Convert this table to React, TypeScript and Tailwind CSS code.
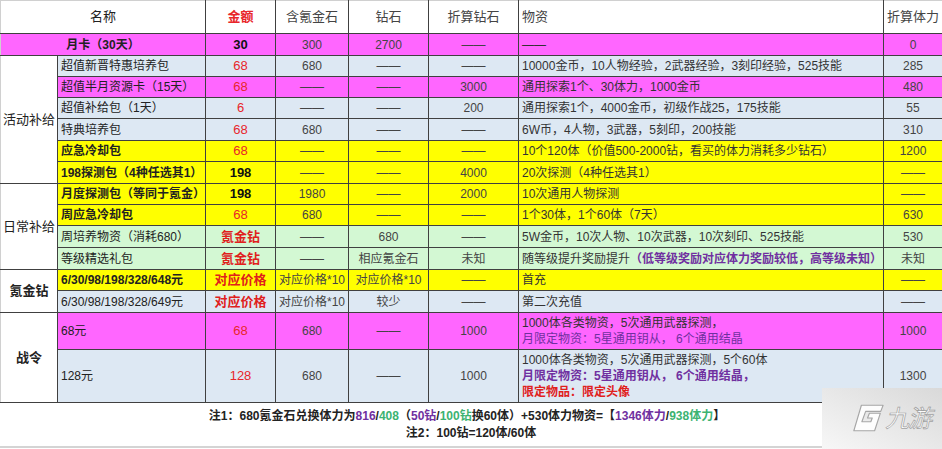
import type { ReactNode } from 'react';

const MAG = 'bg-[#ff66ff]';
const BLUE = 'bg-[#dde8f3]';
const YEL = 'bg-[#ffff00]';
const GRN = 'bg-[#d3f8d3]';

const RED = 'text-[#e8262a]';
const RED_B = 'text-[#e0201c] font-bold';
const BLK_B = 'text-[#111] font-bold';
const PURPLE = 'text-[#7030a0]';

type Row = {
  h: string;
  bg: string;
  cat?: { text: string; span: number; bold?: boolean };
  wide?: boolean;
  name: string;
  nameBold?: boolean;
  amt: string;
  amtCls: string;
  kr: string;
  zs: string;
  zh: string;
  mat: ReactNode;
  ti: string;
};

const D = '——';

const rows: Row[] = [
  { h: 'h-[22px]', bg: MAG, wide: true, name: '月卡（30天）', amt: '30', amtCls: BLK_B, kr: '300', zs: '2700', zh: D, mat: D, ti: '0' },
  {
    h: 'h-[21px]', bg: BLUE, cat: { text: '活动补给', span: 6 }, name: '超值新晋特惠培养包', amt: '68', amtCls: RED,
    kr: '680', zs: D, zh: D, mat: '10000金币，10人物经验，2武器经验，3刻印经验，525技能', ti: '285',
  },
  { h: 'h-[21px]', bg: MAG, name: '超值半月资源卡（15天）', amt: '68', amtCls: RED, kr: D, zs: D, zh: '3000', mat: '通用探索1个、30体力，1000金币', ti: '480' },
  { h: 'h-[21px]', bg: BLUE, name: '超值补给包（1天）', amt: '6', amtCls: RED, kr: D, zs: D, zh: '200', mat: '通用探索1个，4000金币，初级作战25，175技能', ti: '55' },
  { h: 'h-[22px]', bg: BLUE, name: '特典培养包', amt: '68', amtCls: RED, kr: '680', zs: D, zh: D, mat: '6W币，4人物，3武器，5刻印，200技能', ti: '310' },
  {
    h: 'h-[21px]', bg: YEL, name: '应急冷却包', nameBold: true, amt: '68', amtCls: RED, kr: D, zs: D, zh: D,
    mat: '10个120体（价值500-2000钻，看买的体力消耗多少钻石）', ti: '1200',
  },
  { h: 'h-[22px]', bg: YEL, name: '198探测包（4种任选其1）', nameBold: true, amt: '198', amtCls: BLK_B, kr: D, zs: D, zh: '4000', mat: '20次探测（4种任选其1）', ti: D },
  {
    h: 'h-[21px]', bg: YEL, cat: { text: '日常补给', span: 4 }, name: '月度探测包（等同于氪金）', nameBold: true, amt: '198', amtCls: BLK_B,
    kr: '1980', zs: D, zh: '2000', mat: '10次通用人物探测', ti: D,
  },
  { h: 'h-[21px]', bg: YEL, name: '周应急冷却包', nameBold: true, amt: '68', amtCls: RED, kr: '680', zs: D, zh: D, mat: '1个30体，1个60体（7天）', ti: '630' },
  {
    h: 'h-[22px]', bg: GRN, name: '周培养物资（消耗680）', amt: '氪金钻', amtCls: RED_B, kr: D, zs: '680', zh: D,
    mat: '5W金币，10次人物、10次武器，10次刻印、525技能', ti: '530',
  },
  {
    h: 'h-[22px]', bg: GRN, name: '等级精选礼包', amt: '氪金钻', amtCls: RED_B, kr: D, zs: '相应氪金石', zh: '未知',
    mat: (
      <>
        随等级提升奖励提升<span className={`${PURPLE} font-bold`}>（低等级奖励对应体力奖励较低，高等级未知）</span>
      </>
    ),
    ti: '未知',
  },
  {
    h: 'h-[21px]', bg: YEL, cat: { text: '氪金钻', span: 2, bold: true }, name: '6/30/98/198/328/648元', nameBold: true, amt: '对应价格', amtCls: RED_B,
    kr: '对应价格*10', zs: '对应价格*10', zh: D, mat: '首充', ti: D,
  },
  { h: 'h-[22px]', bg: BLUE, name: '6/30/98/198/328/649元', amt: '对应价格', amtCls: RED_B, kr: '对应价格*10', zs: '较少', zh: D, mat: '第二次充值', ti: D },
  {
    h: 'h-[37px]', bg: MAG, cat: { text: '战令', span: 2, bold: true }, name: '68元', amt: '68', amtCls: RED, kr: '680', zs: D, zh: '1000',
    mat: (
      <>
        <div>1000体各类物资，5次通用武器探测，</div>
        <div className={PURPLE}>月限定物资：5星通用钥从， 6个通用结晶</div>
      </>
    ),
    ti: '1000',
  },
  {
    h: 'h-[53px]', bg: BLUE, name: '128元', amt: '128', amtCls: RED, kr: '680', zs: D, zh: '1000',
    mat: (
      <>
        <div>1000体各类物资，5次通用武器探测，5个60体</div>
        <div className={`${PURPLE} font-bold`}>月限定物资：5星通用钥从， 6个通用结晶，</div>
        <div className="font-bold text-[#e0201c]">限定物品：限定头像</div>
      </>
    ),
    ti: '1300',
  },
];

const cell = 'border border-[#404040] p-0 align-middle';

function Watermark() {
  return (
    <div className="absolute right-0 bottom-0 flex h-[61px] w-[120px] items-center gap-[2px] bg-linear-to-bl from-[#d9d9d9] to-[#f7f7f7] pl-[29px]">
      <svg width="34" height="31" viewBox="0 0 36 32" className="shrink-0">
        <path
          d="M11 2 H34 L31.5 8.5 H15.5 L11.5 19.5 H21 L22.5 15.5 H17.5 L19.5 10.5 H31 L25 29 H3 Z"
          fill="#fdfdfd"
          stroke="#a6a6a6"
          strokeWidth="1.2"
          strokeLinejoin="round"
        />
      </svg>
      <span className="-skew-x-12 text-[24px] leading-none font-normal tracking-[-1px] text-[#fdfdfd] [-webkit-text-stroke:0.7px_#a0a0a0]">
        九游
      </span>
    </div>
  );
}

export default function App() {
  return (
    <div
      lang="zh-CN"
      className="relative h-[449px] w-[942px] overflow-hidden bg-white font-['Liberation_Sans','Noto_Sans_CJK_SC',sans-serif] text-[12px] leading-[16px] text-[#222]"
    >
      <table className="w-[942px] table-fixed border-collapse">
        <colgroup>
          <col className="w-[57px]" />
          <col className="w-[148px]" />
          <col className="w-[70px]" />
          <col className="w-[73px]" />
          <col className="w-[80px]" />
          <col className="w-[90px]" />
          <col className="w-[365px]" />
          <col className="w-[59px]" />
        </colgroup>
        <thead>
          <tr className="h-[33px] text-[13px]">
            <th colSpan={2} className={`${cell} border-t-[#d0d0d0] border-l-[#d0d0d0] font-normal`}>名称</th>
            <th className={`${cell} border-t-[#d0d0d0] font-bold text-[#e8262a]`}>金额</th>
            <th className={`${cell} border-t-[#d0d0d0] font-normal text-[#444]`}>含氪金石</th>
            <th className={`${cell} border-t-[#d0d0d0] font-normal text-[#444]`}>钻石</th>
            <th className={`${cell} border-t-[#d0d0d0] font-normal text-[#444]`}>折算钻石</th>
            <th className={`${cell} border-t-[#d0d0d0] px-[3px] text-left font-normal text-[#444]`}>物资</th>
            <th className={`${cell} border-t-[#d0d0d0] border-r-[#d0d0d0] font-normal text-[#444]`}>折算体力</th>
          </tr>
        </thead>
        <tbody>
          {rows.map((r) => (
            <tr key={r.name} className={r.h}>
              {r.cat && (
                <td
                  rowSpan={r.cat.span}
                  className={`${cell} border-l-[#d0d0d0] bg-white text-center text-[13px] ${r.cat.bold ? 'font-bold' : ''}`}
                >
                  {r.cat.text}
                </td>
              )}
              <td
                colSpan={r.wide ? 2 : 1}
                className={`${cell} ${r.bg} whitespace-nowrap px-[3px] text-[12px] ${r.wide ? 'border-l-[#d0d0d0] text-center font-bold' : 'text-left'} ${r.nameBold ? 'font-bold' : ''}`}
              >
                {r.name}
              </td>
              <td className={`${cell} ${r.bg} text-center text-[13px] ${r.amtCls}`}>{r.amt}</td>
              <td className={`${cell} ${r.bg} whitespace-nowrap text-center text-[#444]`}>{r.kr}</td>
              <td className={`${cell} ${r.bg} whitespace-nowrap text-center text-[#444]`}>{r.zs}</td>
              <td className={`${cell} ${r.bg} text-center text-[#444]`}>{r.zh}</td>
              <td className={`${cell} ${r.bg} whitespace-nowrap px-[3px] text-left text-[#333]`}>{r.mat}</td>
              <td className={`${cell} ${r.bg} border-r-[#d0d0d0] text-center text-[#444]`}>{r.ti}</td>
            </tr>
          ))}
        </tbody>
      </table>
      <div className="flex h-[45px] flex-col items-center justify-center border-b-2 border-[#d4d4d4] text-[12px] leading-[17px] font-bold text-[#222]">
        <div className="pr-[8px]">
          注1：680氪金石兑换体力为<span className={PURPLE}>816</span>/<span className="text-[#3cb371]">408</span>（
          <span className={PURPLE}>50钻</span>/<span className="text-[#3cb371]">100钻</span>换60体）+530体力物资=【
          <span className={PURPLE}>1346体力</span>/<span className="text-[#3cb371]">938体力</span>】
        </div>
        <div>注2：100钻=120体/60体</div>
      </div>
      <Watermark />
    </div>
  );
}
